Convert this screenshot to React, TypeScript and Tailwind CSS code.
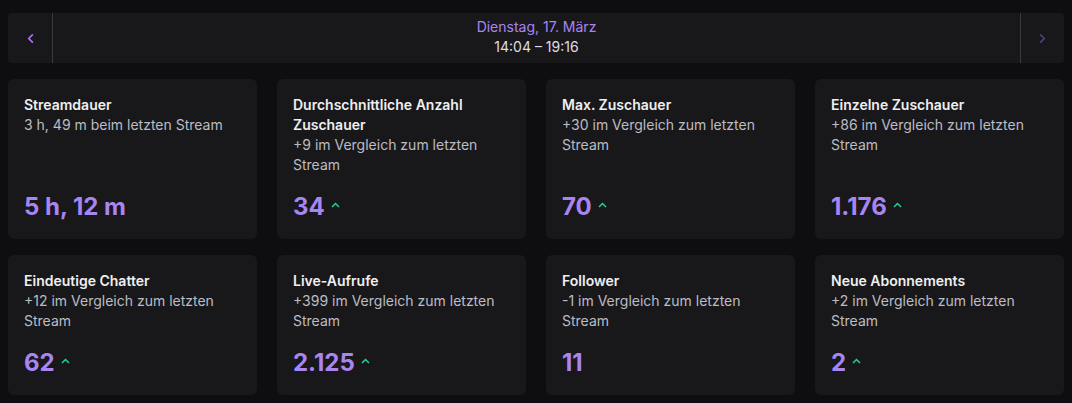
import React from 'react';

interface Stat {
  title: string;
  subtitle: string;
  value: string;
  up?: boolean;
}

const stats: Stat[] = [
  { title: 'Streamdauer', subtitle: '3 h, 49 m beim letzten Stream', value: '5 h, 12 m' },
  {
    title: 'Durchschnittliche Anzahl Zuschauer',
    subtitle: '+9 im Vergleich zum letzten Stream',
    value: '34',
    up: true,
  },
  { title: 'Max. Zuschauer', subtitle: '+30 im Vergleich zum letzten Stream', value: '70', up: true },
  { title: 'Einzelne Zuschauer', subtitle: '+86 im Vergleich zum letzten Stream', value: '1.176', up: true },
  { title: 'Eindeutige Chatter', subtitle: '+12 im Vergleich zum letzten Stream', value: '62', up: true },
  { title: 'Live-Aufrufe', subtitle: '+399 im Vergleich zum letzten Stream', value: '2.125', up: true },
  { title: 'Follower', subtitle: '-1 im Vergleich zum letzten Stream', value: '11' },
  { title: 'Neue Abonnements', subtitle: '+2 im Vergleich zum letzten Stream', value: '2', up: true },
];

const Caret: React.FC<{ dir: 'left' | 'right' | 'up'; className?: string }> = ({ dir, className }) => {
  const d =
    dir === 'left' ? 'M6 1 L2 5 L6 9' : dir === 'right' ? 'M2 1 L6 5 L2 9' : 'M1 6 L5 2 L9 6';
  return (
    <svg
      viewBox={dir === 'up' ? '0 0 10 8' : '0 0 8 10'}
      className={className}
      fill="none"
      stroke="currentColor"
      strokeWidth={2}
      strokeLinecap="square"
    >
      <path d={d} />
    </svg>
  );
};

const StatCard: React.FC<{ stat: Stat }> = ({ stat }) => (
  <div className="flex flex-col rounded-md bg-[#18181b] p-4">
    <div className="text-sm font-semibold leading-5 text-[#efeff1]">{stat.title}</div>
    <div className="text-sm leading-5 text-[#bcbcc4]">{stat.subtitle}</div>
    <div className="mt-auto flex items-center pt-4">
      <span className="text-2xl font-bold leading-8 text-[#a985f2]">{stat.value}</span>
      {stat.up && <Caret dir="up" className="ml-[6px] mb-[5px] h-[6px] w-[9px] text-[#1fd28e]" />}
    </div>
  </div>
);

export default function App() {
  return (
    <div
      className="min-h-[403px] bg-[#0e0e10] px-2 pt-[13px] pb-2"
      style={{ fontFamily: 'Inter, "Noto Sans", sans-serif' }}
    >
      <div className="flex h-[50px] rounded-sm bg-[#18181b]">
        <button className="flex w-[45px] items-center justify-center border-r border-[#3a3a3d]">
          <Caret dir="left" className="h-[9px] w-[7px] text-[#a970ff]" />
        </button>
        <div className="flex flex-1 flex-col items-center justify-center pb-[3px] text-sm leading-5">
          <span className="text-[#a985f2]">Dienstag, 17. März</span>
          <span className="text-[#dedee3]">14:04 – 19:16</span>
        </div>
        <button className="flex w-[44px] items-center justify-center border-l border-[#3a3a3d]">
          <Caret dir="right" className="h-[9px] w-[7px] text-[#4f3f78]" />
        </button>
      </div>
      <div className="mt-4 grid grid-cols-4 gap-x-5 gap-y-4">
        {stats.map((s) => (
          <StatCard key={s.title} stat={s} />
        ))}
      </div>
    </div>
  );
}
